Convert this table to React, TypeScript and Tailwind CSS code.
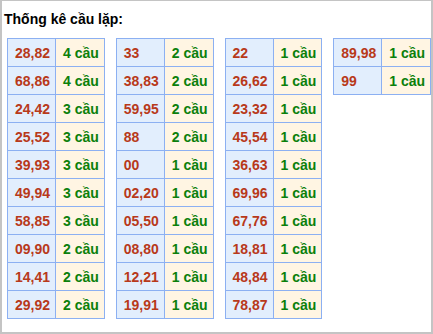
import React from 'react';

type Row = [string, number];

const tables: Row[][] = [
  [
    ['28,82', 4], ['68,86', 4], ['24,42', 3], ['25,52', 3], ['39,93', 3],
    ['49,94', 3], ['58,85', 3], ['09,90', 2], ['14,41', 2], ['29,92', 2],
  ],
  [
    ['33', 2], ['38,83', 2], ['59,95', 2], ['88', 2], ['00', 1],
    ['02,20', 1], ['05,50', 1], ['08,80', 1], ['12,21', 1], ['19,91', 1],
  ],
  [
    ['22', 1], ['26,62', 1], ['23,32', 1], ['45,54', 1], ['36,63', 1],
    ['69,96', 1], ['67,76', 1], ['18,81', 1], ['48,84', 1], ['78,87', 1],
  ],
  [
    ['89,98', 1], ['99', 1],
  ],
];

const CauTable: React.FC<{ rows: Row[] }> = ({ rows }) => (
  <table className="w-[98px] border-collapse table-fixed">
    <tbody>
      {rows.map(([pair, n]) => (
        <tr key={pair} className="h-[28px]">
          <td className="w-[48px] border border-[#8cb0f2] bg-[#e2eefd] p-0 pl-[7px] text-[#b8391a]">
            {pair}
          </td>
          <td className="border border-[#8cb0f2] bg-[#fff5e3] p-0 pl-[7px] text-[#0b800b]">
            {n} cầu
          </td>
        </tr>
      ))}
    </tbody>
  </table>
);

export default function App() {
  return (
    <div className="w-[433px] h-[334px] border-x-2 border-b-2 border-t border-[#c4c4c4] bg-white font-['Liberation_Sans',Arial,sans-serif] text-[14px] font-bold leading-none">
      <div className="pl-[2px] pt-[11px] text-black">Thống kê cầu lặp:</div>
      <div className="flex items-start gap-[11px] pl-[5px] pt-[12px]">
        {tables.map((rows, i) => (
          <CauTable key={i} rows={rows} />
        ))}
      </div>
    </div>
  );
}
